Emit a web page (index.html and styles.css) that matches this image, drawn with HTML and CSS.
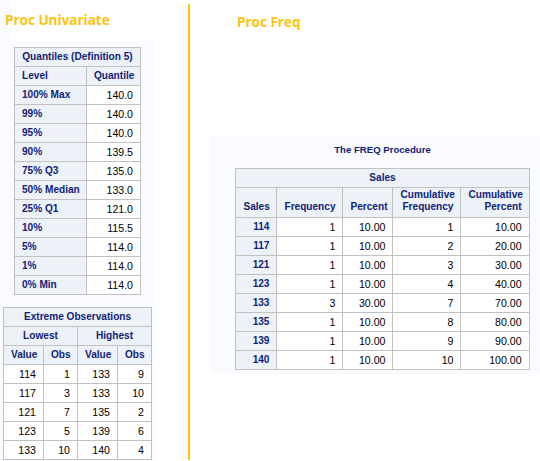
FILE: index.html
```html
<!DOCTYPE html>
<html>
<head>
<meta charset="utf-8">
<link rel="stylesheet" href="styles.css">
</head>
<body>
<div class="page">
  <div class="left">
    <div class="ptitle ptitle-left">Proc Univariate</div>
    <div class="panel-left">
      <table class="t quant">
        <colgroup><col class="c72"><col class="c54"></colgroup>
        <tr><th colspan="2" class="center">Quantiles (Definition 5)</th></tr>
        <tr><th class="l">Level</th><th class="l">Quantile</th></tr>
        <tr><th class="l">100% Max</th><td>140.0</td></tr>
        <tr><th class="l">99%</th><td>140.0</td></tr>
        <tr><th class="l">95%</th><td>140.0</td></tr>
        <tr><th class="l">90%</th><td>139.5</td></tr>
        <tr><th class="l">75% Q3</th><td>135.0</td></tr>
        <tr><th class="l">50% Median</th><td>133.0</td></tr>
        <tr><th class="l">25% Q1</th><td>121.0</td></tr>
        <tr><th class="l">10%</th><td>115.5</td></tr>
        <tr><th class="l">5%</th><td>114.0</td></tr>
        <tr><th class="l">1%</th><td>114.0</td></tr>
        <tr><th class="l">0% Min</th><td>114.0</td></tr>
      </table>
      <table class="t extreme">
        <colgroup><col class="c40"><col class="c34"><col class="c40"><col class="c34"></colgroup>
        <tr><th colspan="4" class="center">Extreme Observations</th></tr>
        <tr><th colspan="2" class="center">Lowest</th><th colspan="2" class="center">Highest</th></tr>
        <tr><th class="center">Value</th><th class="center">Obs</th><th class="center">Value</th><th class="center">Obs</th></tr>
        <tr><td>114</td><td>1</td><td>133</td><td>9</td></tr>
        <tr><td>117</td><td>3</td><td>133</td><td>10</td></tr>
        <tr><td>121</td><td>7</td><td>135</td><td>2</td></tr>
        <tr><td>123</td><td>5</td><td>139</td><td>6</td></tr>
        <tr><td>133</td><td>10</td><td>140</td><td>4</td></tr>
      </table>
    </div>
  </div>
  <div class="divider"></div>
  <div class="right">
    <div class="ptitle ptitle-right">Proc Freq</div>
    <div class="panel-right">
      <div class="proc-title">The FREQ Procedure</div>
      <table class="t freq">
        <colgroup><col class="c41"><col class="c66"><col class="c50"><col class="c68"><col class="c68"></colgroup>
        <tr><th colspan="5" class="center">Sales</th></tr>
        <tr class="hdr"><th>Sales</th><th>Frequency</th><th>Percent</th><th>Cumulative<br>Frequency</th><th>Cumulative<br>Percent</th></tr>
        <tr><th>114</th><td>1</td><td>10.00</td><td>1</td><td>10.00</td></tr>
        <tr><th>117</th><td>1</td><td>10.00</td><td>2</td><td>20.00</td></tr>
        <tr><th>121</th><td>1</td><td>10.00</td><td>3</td><td>30.00</td></tr>
        <tr><th>123</th><td>1</td><td>10.00</td><td>4</td><td>40.00</td></tr>
        <tr><th>133</th><td>3</td><td>30.00</td><td>7</td><td>70.00</td></tr>
        <tr><th>135</th><td>1</td><td>10.00</td><td>8</td><td>80.00</td></tr>
        <tr><th>139</th><td>1</td><td>10.00</td><td>9</td><td>90.00</td></tr>
        <tr><th>140</th><td>1</td><td>10.00</td><td>10</td><td>100.00</td></tr>
      </table>
    </div>
  </div>
</div>
</body>
</html>
```

FILE: styles.css
```css
html, body {
  margin: 0;
  padding: 0;
  background: #ffffff;
  overflow: hidden;
}
body {
  font-family: "Liberation Sans", Arial, sans-serif;
}
.page {
  display: flex;
  width: 540px;
  height: 461px;
  overflow: hidden;
}
.left {
  width: 188px;
  flex: none;
  display: flex;
  flex-direction: column;
}
.ptitle {
  font-family: "Open Sans", "Liberation Sans", sans-serif;
  font-weight: 700;
  font-size: 13.5px;
  color: #ffc20e;
  white-space: nowrap;
}
.ptitle-left {
  height: 41px;
  line-height: 41px;
  padding-left: 5px;
  background: linear-gradient(#fafbfe, #fafbfe) 0 0 / 12px 40px no-repeat;
}
.panel-left {
  width: 155px;
  flex: 1;
  background: #fafbfe;
  display: flex;
  flex-direction: column;
  align-items: center;
  padding-top: 6px;
  gap: 12px;
}
.divider {
  width: 2px;
  flex: none;
  background: #ffc20e;
  margin: 4px 0 1px;
}
.right {
  flex: 1;
  min-width: 0;
  display: flex;
  flex-direction: column;
}
.ptitle-right {
  height: 136px;
  line-height: 44px;
  padding-left: 47px;
}
.panel-right {
  width: 345px;
  margin-left: 20px;
  background: #fafbfe;
  padding-bottom: 3px;
  display: flex;
  flex-direction: column;
  align-items: center;
}
.proc-title {
  height: 32px;
  line-height: 16px;
  padding-top: 6px;
  box-sizing: border-box;
  font-size: 9.6px;
  font-weight: 700;
  color: #112277;
  text-align: center;
}
.t {
  border-collapse: collapse;
  table-layout: fixed;
  border: 1px solid #c1c1c1;
}
.t th, .t td {
  border: 1px solid #c1c1c1;
  height: 18px;
  padding: 0 7px;
  line-height: 12px;
  text-align: right;
  vertical-align: middle;
  white-space: nowrap;
  overflow: hidden;
}
.t th {
  background: #edf2f9;
  color: #112277;
  font-weight: 700;
  font-size: 10.1px;
}
.t td {
  background: #ffffff;
  color: #000000;
  font-size: 10.6px;
}
.t th.l { text-align: left; }
.t th.center { text-align: center; }
.t tr.hdr th {
  height: 30px;
  vertical-align: bottom;
  padding-bottom: 4px;
  box-sizing: border-box;
}
.quant { width: 127px; }
.extreme { width: 149px; }
.freq { width: 294px; }
.c72 { width: 72px; }
.c54 { width: 54px; }
.c40 { width: 40px; }
.c34 { width: 34px; }
.c41 { width: 41px; }
.c66 { width: 66px; }
.c50 { width: 50px; }
.c68 { width: 68px; }
```
